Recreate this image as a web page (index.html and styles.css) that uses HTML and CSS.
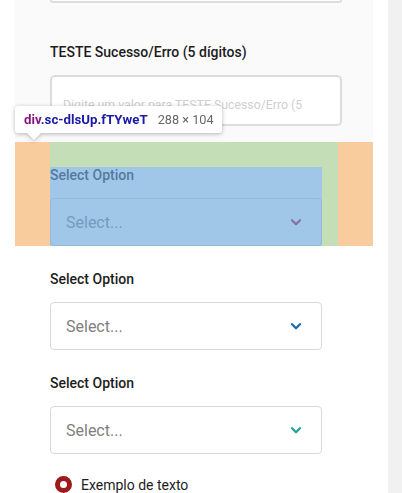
FILE: index.html
```html
<!DOCTYPE html>
<html lang="pt">
<head>
<meta charset="utf-8">
<title>Form</title>
<link rel="stylesheet" href="styles.css">
</head>
<body>
<div class="page">
  <main class="form">
    <section class="panel">
      <div class="prev-input"></div>
      <div class="panel-field">
        <div class="label">TESTE Sucesso/Erro (5 dígitos)</div>
        <div class="textarea"><span class="placeholder">Digite um valor para TESTE Sucesso/Erro (5 dígitos)</span></div>
      </div>
    </section>

    <div class="field field--inspected">
      <div class="field-body">
        <div class="label">Select Option</div>
        <div class="select">
          <span class="select-value">Select...</span>
          <svg class="chevron chevron--red" width="10" height="7" viewBox="0 0 10 7"><path d="M1 1.2 5 5.2 9 1.2"/></svg>
        </div>
      </div>
      <div class="tooltip">
        <span class="tt-sel"><span class="tt-tag">div</span>.sc-dlsUp.fTYweT</span>
        <span class="tt-dim">288 × 104</span>
      </div>
    </div>

    <div class="field">
      <div class="field-body">
        <div class="label">Select Option</div>
        <div class="select">
          <span class="select-value">Select...</span>
          <svg class="chevron chevron--blue" width="10" height="7" viewBox="0 0 10 7"><path d="M1 1.2 5 5.2 9 1.2"/></svg>
        </div>
      </div>
    </div>

    <div class="field">
      <div class="field-body">
        <div class="label">Select Option</div>
        <div class="select">
          <span class="select-value">Select...</span>
          <svg class="chevron chevron--teal" width="10" height="7" viewBox="0 0 10 7"><path d="M1 1.2 5 5.2 9 1.2"/></svg>
        </div>
      </div>
    </div>

    <div class="radio">
      <span class="radio-dot"></span>
      <span class="radio-label">Exemplo de texto</span>
    </div>
  </main>
  <div class="scrollbar"></div>
</div>
</body>
</html>
```

FILE: styles.css
```css
* { box-sizing: border-box; }
html, body { margin: 0; padding: 0; }
body {
  font-family: Roboto, "Noto Sans", Arial, sans-serif;
  color: #212121;
  background: #fff;
}
.page {
  display: flex;
  height: 493px;
  overflow: hidden;
}
.form {
  flex: 1;
  padding: 0 15px;
  background: #fff;
}
.scrollbar {
  width: 14px;
  background: #f1f1f1;
}
.panel {
  background: #fafafa;
  padding: 0 31px 16px 35px;
}
.prev-input {
  height: 3px;
  background: #fff;
  border: 2px solid #dcdbe3;
  border-top: 0;
  border-radius: 0 0 5px 5px;
}
.panel-field {
  padding-top: 41px;
}
.label {
  font-size: 14px;
  font-weight: 500;
  line-height: 16px;
  margin-bottom: 15px;
  color: #1c1c1c;
}
.textarea {
  height: 51px;
  background: #fff;
  border: 2px solid #dcdbe3;
  border-radius: 5px;
  padding: 17px 12px 0 11px;
  overflow: hidden;
}
.placeholder {
  font-size: 12.3px;
  line-height: 16px;
  color: #cfcfcf;
}
.field {
  margin: 0 35px;
  padding: 25px 16px 0 0;
}
.field--inspected {
  position: relative;
  background: #c4dfb8;
  box-shadow: -35px 0 0 #f9cc9d, 35px 0 0 #f9cc9d;
}
.field-body {
  position: relative;
  background: #fff;
}
.field--inspected .field-body::after {
  content: "";
  position: absolute;
  inset: 0;
  background: rgba(111, 168, 220, 0.66);
}
.select {
  height: 48px;
  border: 1px solid #d9d9d9;
  border-radius: 4px;
  padding: 0 20px 0 15px;
  display: flex;
  align-items: center;
  justify-content: space-between;
  background: #fff;
}
.select-value {
  font-size: 16px;
  color: #808080;
}
.chevron path {
  fill: none;
  stroke-width: 2.3;
  stroke-linecap: round;
  stroke-linejoin: round;
}
.chevron--red path { stroke: #b0142c; }
.chevron--blue path { stroke: #1b6ea8; }
.chevron--teal path { stroke: #21a594; }
.tooltip {
  position: absolute;
  z-index: 2;
  left: -35px;
  top: -36px;
  height: 27px;
  padding: 0 8px 0 9px;
  display: flex;
  align-items: center;
  gap: 10px;
  background: #fff;
  border-radius: 3px;
  filter: drop-shadow(0 1px 2px rgba(0, 0, 0, 0.28));
  white-space: nowrap;
}
.tooltip::after {
  content: "";
  position: absolute;
  left: 12px;
  bottom: -7px;
  border-left: 7px solid transparent;
  border-right: 7px solid transparent;
  border-top: 7px solid #fff;
}
.tt-sel {
  font-size: 13.25px;
  font-weight: 700;
  color: #1a1aa6;
}
.tt-tag { color: #881280; }
.tt-dim {
  font-size: 12.7px;
  color: #666;
}
.radio {
  margin: 22px 35px 0;
  padding-left: 5px;
  display: flex;
  align-items: center;
  gap: 9px;
}
.radio-dot {
  width: 17px;
  height: 17px;
  border-radius: 50%;
  border: 5px solid #9b1b1b;
  background: #fff;
  flex: none;
}
.radio-label {
  font-size: 14px;
  color: #1c1c1c;
}
```
